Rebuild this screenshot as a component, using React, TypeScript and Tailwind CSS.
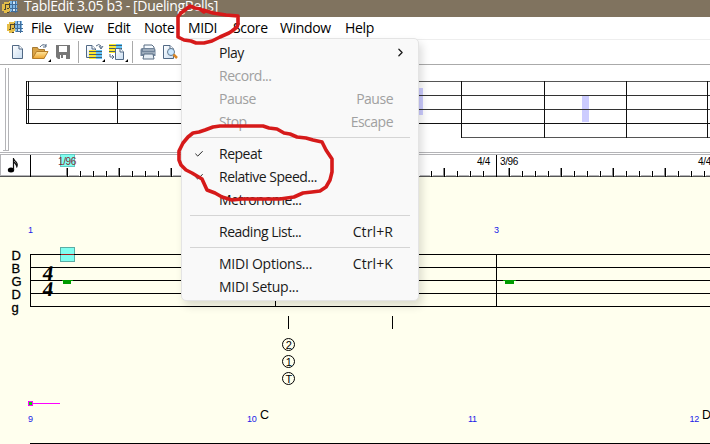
import type { ReactNode } from 'react'
import { Check, ChevronRight } from 'lucide-react'

type Entry = { label: string; shortcut?: string; checked?: boolean; disabled?: boolean; submenu?: boolean; spacing?: string }

const menus = [
  { label: 'File', width: 'w-[33px]' },
  { label: 'View', width: 'w-[43px]' },
  { label: 'Edit', width: 'w-[37px]' },
  { label: 'Note', width: 'w-[44px]' },
  { label: 'MIDI', width: 'w-[45px]' },
  { label: 'Score', width: 'w-[47px]' },
  { label: 'Window', width: 'w-[65px]' },
  { label: 'Help', width: 'w-[40px]' },
]

const groups: Entry[][] = [
  [
    { label: 'Play', submenu: true },
    { label: 'Record...', disabled: true },
    { label: 'Pause', shortcut: 'Pause', disabled: true },
    { label: 'Stop', shortcut: 'Escape', disabled: true },
  ],
  [
    { label: 'Repeat', checked: true },
    { label: 'Relative Speed...', checked: true },
    { label: 'Metronome...' },
  ],
  [{ label: 'Reading List...', shortcut: 'Ctrl+R', spacing: 'tracking-[0.1px]' }],
  [
    { label: 'MIDI Options...', shortcut: 'Ctrl+K', spacing: 'tracking-[0.1px]' },
    { label: 'MIDI Setup...' },
  ],
]

const ticks = Array.from({ length: 50 }, (_, i) => 67 + i * 13).filter((x) => x < 710 && x !== 496)
const tallTicks = [67, 119, 171, 444, 509, 561, 613, 665]

function AppLogo() {
  return (
    <svg width="17" height="14" viewBox="0 0 17 14" shapeRendering="crispEdges">
      <path d="M0 4h2V2h5V1h3v10H7v2H2v-2H0z" fill="#e5bd48" />
      <path d="M3 4v5M3 4h4M7 3v5M2 9h2M5 8h2M5 12h2" stroke="#4c452f" fill="none" />
      <path d="M8 1h7v11H8z" fill="#80b9e7" />
      <path d="M10 1v11M13 1v12M8 4h8M8 8h8M9 11h7" stroke="#416d9b" fill="none" />
      <path d="M11 2h2v2h-2zM11 9h2v2h-2z" fill="#d3e9fa" />
    </svg>
  )
}

function Page({ x, y, w = 11, h = 14 }: { x: number; y: number; w?: number; h?: number }) {
  return (
    <g transform={`translate(${x} ${y})`}>
      <path d={`M.5.5H${w - 4}L${w - .5} 4V${h - .5}H.5Z`} fill="url(#paper)" stroke="#516985" />
      <path d={`M${w - 4} .5V4H${w - .5}`} fill="#fff" stroke="#516985" />
    </g>
  )
}

function ToolIcons() {
  return (
    <svg width="182" height="24" viewBox="0 40 182 24">
      <defs>
        <linearGradient id="paper" x2="1" y2="1">
          <stop stopColor="#fff" />
          <stop offset="1" stopColor="#c8dcf0" />
        </linearGradient>
        <linearGradient id="folder" y2="1" x2="0">
          <stop stopColor="#ffe6a0" />
          <stop offset="1" stopColor="#eda52e" />
        </linearGradient>
      </defs>
      <Page x={12} y={45} />
      <path d="M32.5 58V47.5h5l1 2h6V58z" fill="#d9a345" stroke="#a67a34" />
      <path d="M32.5 58.5 36.5 51.5H48L44 58.5z" fill="url(#folder)" stroke="#b57c27" />
      <path d="M40 47q3-4 6-1m0-2v3h-3" fill="none" stroke="#526983" />
      <path d="M56 45h14v14H58l-2-2z" fill="#777" />
      <path d="M59 46h8v6h-8zM60 55h6v4h-6z" fill="#fff" />
      <path d="M61 55h2v3h-2z" fill="#777" />
      <path d="M78.5 41v22M132.5 41v22" stroke="#aaa" />
      <Page x={86} y={45} w={10} h={13} />
      <g shapeRendering="crispEdges">
        <path d="M89 50h7v9h-7z" fill="#ffe92e" />
        <path d="M96 50h6v9h-6z" fill="#62c4fa" />
        <path d="M89 51.5h13M89 54.5h13M89 57.5h13" stroke="#46606c" />
        <path d="M109 44h7v9h-7z" fill="#ffe92e" />
        <path d="M116 44h6v9h-6z" fill="#62c4fa" />
        <path d="M109 45.5h13M109 48.5h13M109 51.5h13" stroke="#46606c" />
      </g>
      <path d="M96 46q3-3 5 0v2m-2-2 2 3 2-3M110 54v3h4m-2-2 2 2-2 2" fill="none" stroke="#526983" />
      <Page x={115} y={48} w={9} h={12} />
      <path d="M51 59v3h-3zM105 59v3h-3zM128 59v3h-3z" fill="#000" />
      <path d="M144 50v-5h8l2 2v3" fill="#f5faff" stroke="#596d83" />
      <path d="M140.500 50q0-2 2-2h11q2 0 2 2v6h-15z" fill="#71849a" />
      <path d="M143 50h11M142 53h13" stroke="#c8d2dc" />
      <path d="M144 54h9l1 5h-11z" fill="#e5edf4" stroke="#596d83" />
      <Page x={163} y={45} w={11} h={14} />
      <circle cx="171" cy="52" r="3.5" fill="#cbe8ff" stroke="#62788e" />
      <path d="m173.500 54.500 3.500 3.500" stroke="#d88525" strokeWidth="2.5" />
    </svg>
  )
}

function Overview() {
  return (
    <svg width="710" height="88" viewBox="0 65 710 88" shapeRendering="crispEdges">
      <path d="M5.5 68v82M8.5 68v82M3 150.5h6" stroke="#b4b4b7" />
      <path d="M419 88h4v27h-4zM582 96h7v26h-7z" fill="#ccccff" />
      <path d="M26 81.5h684M461 137.5h249" stroke="#555" />
      <path d="M26 95.5h684M26 109.5h684" stroke="#333" />
      <path d="M26 123.5h684M26.5 81v43M28.5 81v43M117.5 81v43M461.5 81v57M544.5 81v57M626.5 81v57M707.5 81v57" stroke="#111" />
      <path d="M0 152.5h710" stroke="#b4b4b7" />
    </svg>
  )
}

function Ruler() {
  return (
    <svg width="710" height="24" viewBox="0 153 710 24" className="font-['Liberation_Sans',sans-serif] text-[10px]">
      <g shapeRendering="crispEdges">
        <path d="M0 154.5h710M.5 154v22M0 175.5h710" stroke="#b4b4b7" fill="none" />
        <path d="M0 176.5h710" stroke="#555" />
        <path d="M60.5 154.5h14v12h-14z" fill="#80fff0" stroke="#63c9c3" />
        {ticks.map((x) => (
          <g key={x}>
            <path d={`M${x - 1} 175.5h3`} stroke="#fff" />
            {tallTicks.includes(x) && <path d={`M${x - .5} 168v8`} stroke="#888" />}
            <path d={`M${x + .5} ${tallTicks.includes(x) ? 168 : 171}v6`} stroke="#000" />
            <path d={`M${x + .5} 172v5`} stroke="#000" />
          </g>
        ))}
        <path d="M30.5 155v22M496.5 155v22" stroke="#000" />
      </g>
      <ellipse cx="11" cy="170" rx="3.2" ry="2.500" fill="#000" />
      <path d="M13.500 170v-12q.2 2 3 4.500 1.500 2 0 5M13.500 161.500q2 1.500 3.500 5" fill="none" stroke="#111" strokeWidth="1.2" />
      <text x="58" y="165" fill="#842b35" textLength="18">1/96</text>
      <text x="477" y="165" textLength="13">4/4</text>
      <text x="500" y="165" textLength="18">3/96</text>
      <text x="698" y="165" textLength="13">4/4</text>
    </svg>
  )
}

function Score() {
  const strings = ['D', 'B', 'G', 'D', 'g']
  return (
    <svg width="710" height="267" viewBox="0 177 710 267" className="bg-[#ffffee] font-['Liberation_Sans',sans-serif]">
      <g shapeRendering="crispEdges">
        <path d="M60.5 247.5h14v14h-14z" fill="#80fff0" stroke="#5bada5" />
        <path d="M30 254.5h680M30 267.5h680M30 280.5h680M30 293.5h680M30 306.5h680M30.5 254v53M275.5 254v53M496.5 254v53M288.5 316v13M392.5 316v13M30 443.5h680" stroke="#000" />
        <path d="M61 254.5h13" stroke="#a02020" />
        <path d="M62 280h11v1h-2v3h-8v-3h-1zM503 280h13v1h-2v3h-9v-3h-2z" fill="#009b00" />
        <path d="M33 403.5h27" stroke="#f0f" />
        <path d="M28.5 401.5h4v4h-4z" fill="#00e000" stroke="#f0f" />
      </g>
      <g fontSize="13" stroke="#000" strokeWidth=".3">
        {strings.map((s, i) => <text key={i} x="11.5" y={260 + i * 13}>{s}</text>)}
      </g>
      <g className="font-['Liberation_Serif',serif] text-[21px] font-bold">
        <text transform="translate(42 279.500) skewX(-7)">4</text>
        <text transform="translate(42 295.500) skewX(-7)">4</text>
      </g>
      <g fontSize="9" fill="#2020e8">
        <text x="28" y="233">1</text>
        <text x="494" y="233">3</text>
        <text x="28" y="422">9</text>
        <text x="247" y="422">10</text>
        <text x="468" y="422">11</text>
        <text x="689.5" y="422">12</text>
      </g>
      <text x="260" y="419" fontSize="12.5">C</text>
      <text x="702" y="419" fontSize="12.5">D</text>
      {['2', '1', 'T'].map((finger, i) => (
        <g key={finger}>
          <circle cx="288.5" cy={344.5 + i * 17} r="6" fill="none" stroke="#000" />
          <text x="288.7" y={348.5 + i * 17} fontSize="11" textAnchor="middle">{finger}</text>
        </g>
      ))}
    </svg>
  )
}

function MenuGroup({ first, children }: { first: boolean; children: ReactNode }) {
  return (
    <>
      {!first && <div className="mx-2 mt-[3px] mb-[5px] h-px shrink-0 bg-[#d5d5d5]" />}
      {children}
    </>
  )
}

function MidiMenu() {
  return (
    <div className="absolute top-[38px] left-[181px] flex h-[263px] w-[238px] flex-col rounded-b-[5px] rounded-tr-[5px] border border-[#e4e4e4] bg-[#f9f9f9] pt-[3px] shadow-[3px_5px_8px_rgba(0,0,0,0.14)]">
      {groups.map((group, i) => (
        <MenuGroup key={i} first={i === 0}>
          {group.map((item) => (
            <div key={item.label} className={`flex h-[23px] shrink-0 items-center pr-[25px] pb-[2px] pl-[12px] ${item.disabled ? 'text-[#a0a0a0]' : 'text-[#191919]'}`}>
              <span className="w-[25px]">{item.checked && <Check size={10} strokeWidth={2.3} />}</span>
              <span className={`flex-1 ${item.label.startsWith('MIDI') ? 'tracking-[-0.25px]' : 'tracking-[-0.5px]'}`}>{item.label}</span>
              <span className={item.spacing ?? 'tracking-[-0.5px]'}>{item.shortcut}</span>
              {item.submenu && <ChevronRight size={13} strokeWidth={2.3} className="-mr-[14px]" />}
            </div>
          ))}
        </MenuGroup>
      ))}
    </div>
  )
}

function Marker() {
  return (
    <svg className="absolute top-0 left-0" width="710" height="444" fill="none" stroke="#d61a1a" strokeWidth="3.6" strokeLinejoin="round" strokeLinecap="square">
      <path d="M204 12 200 9 195 8 190 6 185 10 181 13 178 17V37L184 40 191 41 196 43 204 43 212 41 220 37 229 33 232 31 237 27 238 24V16L226 15 213 13 203 10Z" />
      <path d="M188 137 193 133 199 132 205 130 213 127 220 126H263L269 128 277 129 284 133 290 134 297 137 306 138 313 140 322 142 326 150 332 159V172L330 180 326 187 320 191 312 192 303 193 294 197 280 199H242L232 200 222 197 215 193 207 190 202 179 192 173 186 170 181 165 179 160V151L183 143Z" />
    </svg>
  )
}

export default function App() {
  return (
    <main className="relative h-[444px] w-[710px] overflow-hidden bg-white font-['Open_Sans',sans-serif] text-[14px] tracking-[-0.35px] text-black">
      <header className="flex h-[17px] bg-[#80735f] text-[14px] leading-[12px] text-white">
        <span className="ml-[2px] w-[22px]"><AppLogo /></span>
        <span className="whitespace-nowrap">TablEdit 3.05 b3 - [DuelingBells]</span>
      </header>
      <nav className="flex h-[22px] items-center pb-[2px] pl-[7px]">
        <span className="w-6"><AppLogo /></span>
        {menus.map((menu) => <span key={menu.label} className={menu.width}>{menu.label}</span>)}
      </nav>
      <section className="h-[26px] border-t border-b border-t-[#eee] border-b-[#aaa]"><ToolIcons /></section>
      <section className="flex flex-col">
        <Overview />
        <Ruler />
        <Score />
      </section>
      <MidiMenu />
      <Marker />
    </main>
  )
}
